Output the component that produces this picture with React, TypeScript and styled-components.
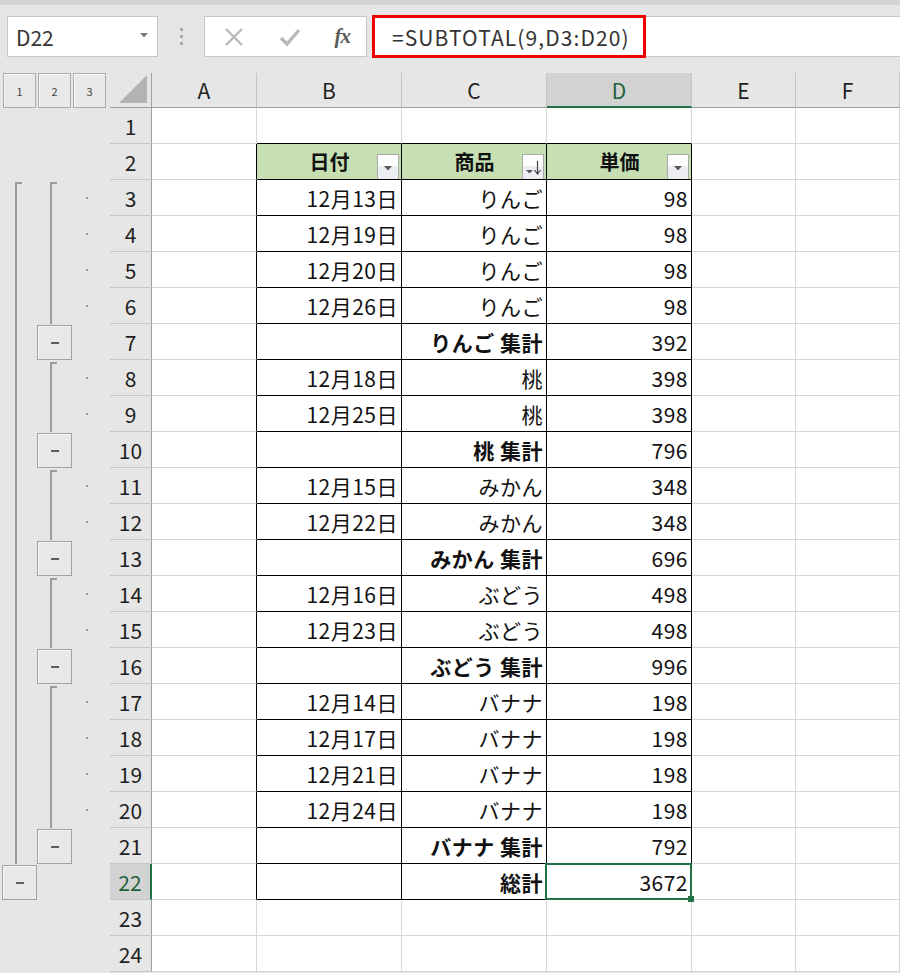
import React from 'react';
import styled, { createGlobalStyle, css } from 'styled-components';

const GlobalStyle = createGlobalStyle`
  html, body {
    margin: 0;
    padding: 0;
    background: #e6e6e6;
    overflow: hidden;
  }
  body {
    font-family: "Noto Sans CJK JP", "Noto Sans", sans-serif;
    color: #1f1f1f;
  }
`;

type Row = { date?: string; item: string; price: string; total?: boolean };

const rows: Row[] = [
  { date: '12月13日', item: 'りんご', price: '98' },
  { date: '12月19日', item: 'りんご', price: '98' },
  { date: '12月20日', item: 'りんご', price: '98' },
  { date: '12月26日', item: 'りんご', price: '98' },
  { item: 'りんご 集計', price: '392', total: true },
  { date: '12月18日', item: '桃', price: '398' },
  { date: '12月25日', item: '桃', price: '398' },
  { item: '桃 集計', price: '796', total: true },
  { date: '12月15日', item: 'みかん', price: '348' },
  { date: '12月22日', item: 'みかん', price: '348' },
  { item: 'みかん 集計', price: '696', total: true },
  { date: '12月16日', item: 'ぶどう', price: '498' },
  { date: '12月23日', item: 'ぶどう', price: '498' },
  { item: 'ぶどう 集計', price: '996', total: true },
  { date: '12月14日', item: 'バナナ', price: '198' },
  { date: '12月17日', item: 'バナナ', price: '198' },
  { date: '12月21日', item: 'バナナ', price: '198' },
  { date: '12月24日', item: 'バナナ', price: '198' },
  { item: 'バナナ 集計', price: '792', total: true },
  { item: '総計', price: '3672', total: true },
];

const COLS = ['A', 'B', 'C', 'D', 'E', 'F'];
const ROW_COUNT = 24;
const GRID = '#d6d6d6';
const GREEN = '#217346';

type Track = 'none' | 'start' | 'line' | 'button';

// outline state of a sheet row: level 1 (grand total) and level 2 (per fruit)
function outlineFor(r: number): { l1: Track; l2: Track; dot: boolean } {
  if (r < 3 || r > 22) return { l1: 'none', l2: 'none', dot: false };
  const data = rows[r - 3];
  const l1: Track = r === 3 ? 'start' : r === 22 ? 'button' : 'line';
  if (r === 22) return { l1, l2: 'none', dot: false };
  if (data.total) return { l1, l2: 'button', dot: false };
  const prev = r === 3 ? undefined : rows[r - 4];
  const l2: Track = !prev || prev.total ? 'start' : 'line';
  return { l1, l2, dot: true };
}

function Outline({ kind }: { kind: Track }) {
  if (kind === 'button') return <MinusButton><span /></MinusButton>;
  if (kind === 'none') return null;
  return <Bracket $start={kind === 'start'} />;
}

function FilterArrow({ sorted }: { sorted?: boolean }) {
  return (
    <FilterButton>
      {sorted ? (
        <svg width="20" height="22" viewBox="0 0 20 22">
          <path d="M3 14 h7 l-3.5 3.5z" fill="#555" />
          <path d="M14.5 5 v12" stroke="#444" strokeWidth="1.2" />
          <path d="M11.5 14 l3 4 l3 -4" stroke="#444" strokeWidth="1.2" fill="none" />
        </svg>
      ) : (
        <svg width="20" height="22" viewBox="0 0 20 22">
          <path d="M6 10 h8 l-4 4.5z" fill="#595959" />
        </svg>
      )}
    </FilterButton>
  );
}

function borderFor(r: number, c: number) {
  const inTableCol = c >= 1 && c <= 3;
  const right = r >= 2 && r <= 22 && c <= 3 ? '#000' : GRID;
  const bottom = inTableCol && r >= 1 && r <= 22 ? '#000' : GRID;
  return { right, bottom };
}

function cellContent(r: number, c: number) {
  if (r === 2 && c >= 1 && c <= 3) {
    const label = ['日付', '商品', '単価'][c - 1];
    return (
      <>
        <Spacer />
        <HeadLabel>{label}</HeadLabel>
        <FilterArrow sorted={c === 2} />
      </>
    );
  }
  if (r >= 3 && r <= 22) {
    const d = rows[r - 3];
    if (c === 1) return <Value>{d.date ?? ''}</Value>;
    if (c === 2) return <Value $bold={d.total}>{d.item}</Value>;
    if (c === 3) return <Value>{d.price}</Value>;
  }
  return null;
}

export default function App() {
  const sheetRows = Array.from({ length: ROW_COUNT }, (_, i) => i + 1);
  return (
    <Page>
      <GlobalStyle />
      <TopStrip />
      <FormulaRow>
        <NameBox>
          <span>D22</span>
          <svg width="8" height="5" viewBox="0 0 8 5"><path d="M0 0 h8 l-4 4.5z" fill="#7a7a7a" /></svg>
        </NameBox>
        <Grip><i /><i /><i /></Grip>
        <FxBox>
          <svg width="22" height="22" viewBox="0 0 22 22">
            <path d="M3 3 L19 19 M19 3 L3 19" stroke="#b9b9b9" strokeWidth="2.4" />
          </svg>
          <svg width="22" height="22" viewBox="0 0 22 22">
            <path d="M2 12 L8 18 L20 4" stroke="#b9b9b9" strokeWidth="3.4" fill="none" />
          </svg>
          <FxText>fx</FxText>
        </FxBox>
        <FormulaBar>
          <Highlight>=SUBTOTAL(9,D3:D20)</Highlight>
        </FormulaBar>
      </FormulaRow>

      <Sheet>
        <LevelButtons>
          <LevelButton>1</LevelButton>
          <LevelButton>2</LevelButton>
          <LevelButton>3</LevelButton>
        </LevelButtons>
        <Corner>
          <svg width="29" height="29" viewBox="0 0 29 29"><path d="M28 0 V28 H0z" fill="#b3b3b3" /></svg>
        </Corner>
        {COLS.map(col => (
          <ColHeader key={col} $active={col === 'D'}>{col}</ColHeader>
        ))}

        {sheetRows.map(r => {
          const o = outlineFor(r);
          return (
            <React.Fragment key={r}>
              <Gutter>
                <Level $w={35} $offset={15}><Outline kind={o.l1} /></Level>
                <Level $w={36} $offset={15}><Outline kind={o.l2} /></Level>
                <DotCell>{o.dot && <Dot />}</DotCell>
              </Gutter>
              <RowHeader $active={r === 22}>{r}</RowHeader>
              {COLS.map((col, c) => {
                const b = borderFor(r, c);
                const selected = r === 22 && c === 3;
                return (
                  <Cell
                    key={col}
                    $right={b.right}
                    $bottom={b.bottom}
                    $header={r === 2 && c >= 1 && c <= 3}
                    $selected={selected}
                  >
                    {cellContent(r, c)}
                    {selected && <Selection><Handle /></Selection>}
                  </Cell>
                );
              })}
            </React.Fragment>
          );
        })}
      </Sheet>
    </Page>
  );
}

const Page = styled.div`
  width: 900px;
  height: 973px;
  overflow: hidden;
  display: flex;
  flex-direction: column;
  background: #e6e6e6;
`;
const TopStrip = styled.div`
  height: 5px;
  background: #d4d4d4;
  flex-shrink: 0;
`;
const FormulaRow = styled.div`
  display: flex;
  height: 41px;
  margin-top: 11px;
  padding-left: 7px;
  flex-shrink: 0;
`;
const NameBox = styled.div`
  width: 151px;
  box-sizing: border-box;
  display: flex;
  align-items: center;
  justify-content: space-between;
  padding: 0 9px 0 8px;
  background: #fff;
  border: 1px solid #c6c6c6;
  font-size: 21px;
  color: #333;
  svg { margin-top: -3px; }
`;
const Grip = styled.div`
  width: 46px;
  display: flex;
  flex-direction: column;
  align-items: center;
  justify-content: center;
  gap: 4px;
  i {
    display: block;
    width: 3px;
    height: 3px;
    background: #a9a9a9;
  }
`;
const FxBox = styled.div`
  width: 163px;
  box-sizing: border-box;
  display: flex;
  align-items: center;
  justify-content: space-between;
  padding: 0 16px 0 18px;
  background: #fff;
  border: 1px solid #c6c6c6;
`;
const FxText = styled.span`
  font-family: "Liberation Serif", serif;
  font-style: italic;
  font-weight: 700;
  font-size: 21px;
  color: #5a5a5a;
  letter-spacing: -1px;
`;
const FormulaBar = styled.div`
  flex: 1;
  margin-left: 5px;
  display: flex;
  background: #fff;
  border-top: 1px solid #c6c6c6;
  border-bottom: 1px solid #c6c6c6;
`;
const Highlight = styled.div`
  margin: -2px 0;
  padding: 0 13px 0 17px;
  display: flex;
  align-items: center;
  border: 3px solid #f00000;
  font-size: 21px;
  letter-spacing: 1.1px;
  color: #333;
`;

const Sheet = styled.div`
  margin-top: 16px;
  display: grid;
  grid-template-columns: 110px 42px 105px 145px 145px 145px 104px 104px;
  grid-template-rows: 35px;
  grid-auto-rows: 36px;
`;
const LevelButtons = styled.div`
  display: flex;
  gap: 2px;
  padding-left: 3px;
`;
const LevelButton = styled.div`
  width: 33px;
  height: 35px;
  box-sizing: border-box;
  display: flex;
  align-items: center;
  justify-content: center;
  border: 1px solid #acacac;
  background: #e9e9e9;
  box-shadow: inset 1px 1px 0 #f7f7f7;
  font-size: 11px;
  color: #444;
`;
const Corner = styled.div`
  display: flex;
  align-items: flex-end;
  justify-content: flex-end;
  padding: 0 3px 3px 0;
  border-right: 1px solid #a3a3a3;
  border-bottom: 1px solid #9e9e9e;
`;
const ColHeader = styled.div<{ $active?: boolean }>`
  display: flex;
  align-items: center;
  justify-content: center;
  font-size: 21px;
  color: #1f1f1f;
  border-right: 1px solid #c4c4c4;
  border-bottom: 1px solid #9e9e9e;
  ${p => p.$active && css`
    background: #d2d2d2;
    color: #1f5f3c;
    border-bottom: 2px solid ${GREEN};
  `}
`;
const Gutter = styled.div`
  display: flex;
`;
const Level = styled.div<{ $w: number; $offset: number }>`
  width: ${p => p.$w}px;
  flex-shrink: 0;
  display: flex;
  flex-direction: column;
  padding-left: 2px;
  box-sizing: border-box;
  & > div:first-child[data-bracket] {
    margin-left: ${p => p.$offset - 2}px;
  }
`;
const Bracket = styled.div.attrs({ 'data-bracket': true })<{ $start?: boolean }>`
  flex: 1;
  width: 5px;
  border-left: 2px solid #9c9c9c;
  ${p => p.$start && css`
    margin-top: 2px;
    border-top: 2px solid #9c9c9c;
  `}
`;
const MinusButton = styled.div`
  width: 35px;
  height: 35px;
  box-sizing: border-box;
  margin-top: 1px;
  display: flex;
  align-items: center;
  justify-content: center;
  border: 1px solid #a2a2a2;
  background: #e8e8e8;
  box-shadow: inset 1px 1px 0 #f6f6f6;
  span {
    width: 8px;
    height: 2px;
    background: #606060;
  }
`;
const DotCell = styled.div`
  flex: 1;
  display: flex;
  align-items: center;
  padding-left: 15px;
`;
const Dot = styled.div`
  width: 2px;
  height: 2px;
  background: #9a9a9a;
`;
const RowHeader = styled.div<{ $active?: boolean }>`
  display: flex;
  align-items: center;
  justify-content: center;
  font-size: 21px;
  color: #1f1f1f;
  border-right: 1px solid #9e9e9e;
  border-bottom: 1px solid #c6c6c6;
  ${p => p.$active && css`
    background: #d2d2d2;
    color: #1f5f3c;
    border-right: 2px solid ${GREEN};
  `}
`;
const Cell = styled.div<{ $right: string; $bottom: string; $header?: boolean; $selected?: boolean }>`
  position: relative;
  display: flex;
  align-items: center;
  justify-content: flex-end;
  min-width: 0;
  background: ${p => (p.$header ? '#c6e0b4' : '#fff')};
  border-right: 1px solid ${p => p.$right};
  border-bottom: 1px solid ${p => p.$bottom};
  ${p => p.$selected && css`z-index: 1;`}
`;
const Spacer = styled.div`
  width: 25px;
  flex-shrink: 0;
`;
const HeadLabel = styled.div`
  flex: 1;
  text-align: center;
  font-size: 20px;
  font-weight: 700;
  color: #111;
`;
const FilterButton = styled.div`
  align-self: flex-end;
  width: 22px;
  height: 25px;
  margin-right: 2px;
  box-sizing: border-box;
  display: flex;
  align-items: center;
  justify-content: center;
  border: 1px solid #a9a9a9;
  border-bottom: none;
  background: linear-gradient(#fdfdfd 0 45%, #eceef3 45%);
`;
const Value = styled.div<{ $bold?: boolean }>`
  padding-right: 3px;
  font-size: 21px;
  letter-spacing: 0.5px;
  white-space: nowrap;
  color: #111;
  font-weight: ${p => (p.$bold ? 700 : 400)};
`;
const Selection = styled.div`
  position: absolute;
  left: -2px;
  top: -1px;
  right: -1px;
  bottom: -1px;
  border: 2px solid ${GREEN};
  pointer-events: none;
`;
const Handle = styled.div`
  position: absolute;
  right: -4px;
  bottom: -4px;
  width: 6px;
  height: 6px;
  background: ${GREEN};
`;
